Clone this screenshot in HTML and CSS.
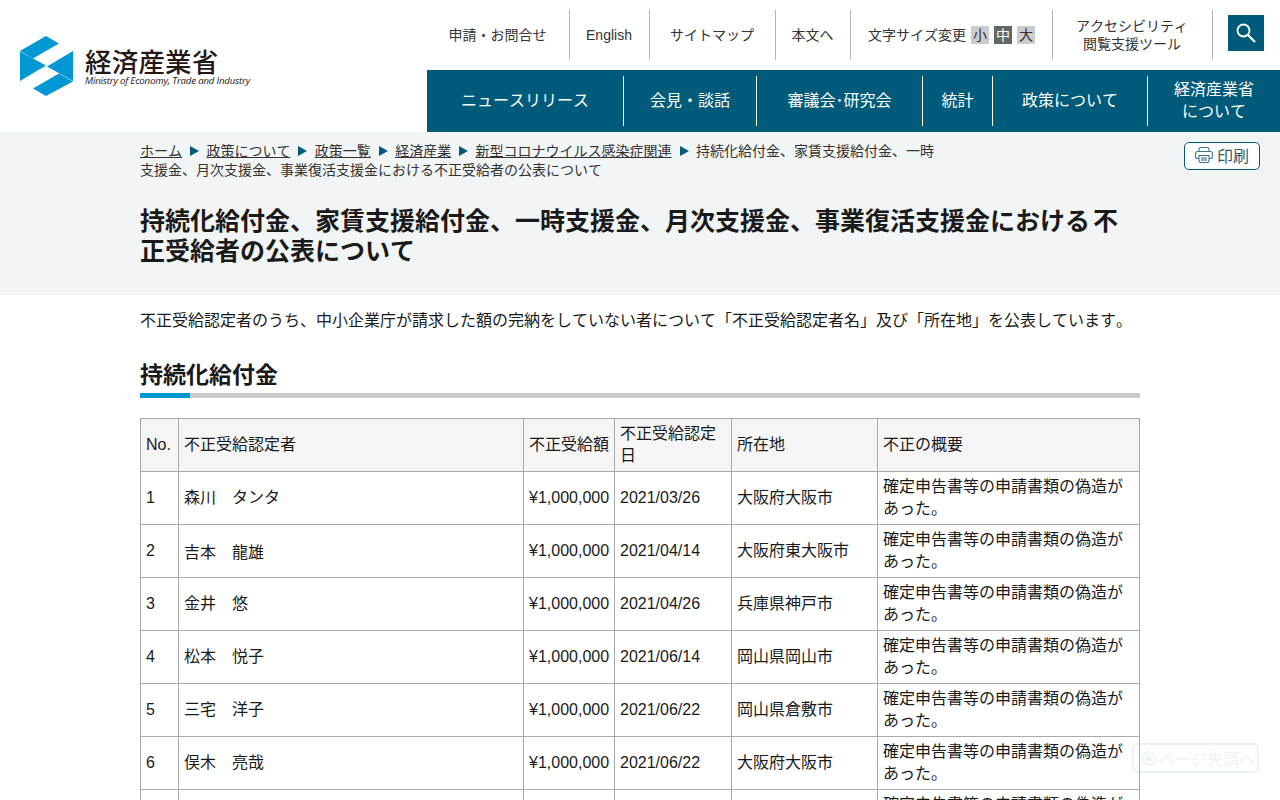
FILE: index.html
```html
<!DOCTYPE html>
<html lang="ja">
<head>
  <meta charset="UTF-8">
  <meta name="viewport" content="width=device-width, initial-scale=1.0">
  <title>持続化給付金、家賃支援給付金、一時支援金、月次支援金、事業復活支援金における不正受給者の公表について</title>
  <link rel="stylesheet" href="styles.css">
</head>
<body>
  <!-- Header -->
  <div class="header">
    <a href="#" class="logo">
      <svg class="logo-mark" width="54" height="60" viewBox="0 0 54 60">
        <polygon fill="#0098d4" points="0,15 26,0 39,7.5 13,22.5"/>
        <polygon fill="#0098d4" points="0,15.5 26,29.5 0,45"/>
        <polygon fill="#0098d4" points="53,15 53,45 27,30.5"/>
        <polygon fill="#0098d4" points="13,52.5 39,37.5 53,45.500 26,60"/>
      </svg>
      <div class="logo-text">
        <div class="logo-ja">経済産業省</div>
        <div class="logo-en">Ministry of Economy, Trade and Industry</div>
      </div>
    </a>
    <div class="header-right">
      <div class="top-nav">
        <a href="#" class="top-item w-contact">申請・お問合せ</a>
        <a href="#" class="top-item w-english">English</a>
        <a href="#" class="top-item w-sitemap">サイトマップ</a>
        <a href="#" class="top-item w-skip">本文へ</a>
        <div class="top-item w-size">
          <span>文字サイズ変更</span>
          <span class="size-btn">小</span>
          <span class="size-btn active">中</span>
          <span class="size-btn">大</span>
        </div>
        <a href="#" class="top-item w-access">アクセシビリティ<br>閲覧支援ツール</a>
        <a href="#" class="search-btn">
          <svg width="22" height="22" viewBox="0 0 22 22" fill="none" stroke="#fff">
            <circle cx="8.500" cy="8.500" r="6" stroke-width="1.800"/>
            <line x1="13" y1="13" x2="20" y2="20" stroke-width="2.200"/>
          </svg>
        </a>
      </div>
      <div class="main-nav">
        <a href="#" class="main-item w-news">ニュースリリース</a>
        <a href="#" class="main-item w-press">会見・談話</a>
        <a href="#" class="main-item w-council">審議会･研究会</a>
        <a href="#" class="main-item w-stats">統計</a>
        <a href="#" class="main-item w-policy">政策について</a>
        <a href="#" class="main-item w-about">経済産業省<br>について</a>
      </div>
    </div>
  </div>

  <!-- Title band -->
  <div class="title-band">
    <div class="container">
      <div class="crumb-row">
        <div class="breadcrumb">
          <a href="#">ホーム</a><span class="arrow"></span><a href="#">政策について</a><span class="arrow"></span><a href="#">政策一覧</a><span class="arrow"></span><a href="#">経済産業</a><span class="arrow"></span><a href="#">新型コロナウイルス感染症関連</a><span class="arrow"></span><span>持続化給付金、家賃支援給付金、一時支援金、月次支援金、事業復活支援金における不正受給者の公表について</span>
        </div>
      </div>
      <h1>持続化給付金、家賃支援給付金、一時支援金、月次支援金、事業復活支援金における<span class="title-gap">不</span>正受給者の公表について</h1>
    </div>
    <a href="#" class="print-btn">
      <svg width="18" height="16" viewBox="0 0 18 16" fill="none" stroke="#3f7488" stroke-width="1.100">
        <path d="M4 4.500V2a1.500 1.500 0 0 1 1.500-1.500h7A1.500 1.500 0 0 1 14 2v2.500"/>
        <path d="M4 11.500H2.500a2 2 0 0 1-2-2V6.500a2 2 0 0 1 2-2h13a2 2 0 0 1 2 2v3a2 2 0 0 1-2 2H14"/>
        <path d="M4 8.500h10v5a2 2 0 0 1-2 2H6a2 2 0 0 1-2-2z"/>
        <line x1="6" y1="11" x2="12" y2="11"/>
        <line x1="6" y1="13" x2="12" y2="13"/>
      </svg>
      印刷
    </a>
  </div>

  <!-- Main content -->
  <div class="container content">
    <p class="lead">不正受給認定者のうち、中小企業庁が請求した額の完納をしていない者について「不正受給認定者名」及び「所在地」を公表しています。</p>
    <h2>持続化給付金</h2>
    <table class="list-table">
      <colgroup>
        <col class="c-no"><col class="c-name"><col class="c-amount"><col class="c-date"><col class="c-place"><col class="c-note">
      </colgroup>
      <tr>
        <th>No.</th><th>不正受給認定者</th><th>不正受給額</th><th>不正受給認定日</th><th>所在地</th><th>不正の概要</th>
      </tr>
      <tr>
        <td>1</td><td>森川　タンタ</td><td>¥1,000,000</td><td>2021/03/26</td><td>大阪府大阪市</td><td>確定申告書等の申請書類の偽造があった。</td>
      </tr>
      <tr>
        <td>2</td><td class="cell-low">吉本　龍雄</td><td>¥1,000,000</td><td>2021/04/14</td><td>大阪府東大阪市</td><td>確定申告書等の申請書類の偽造があった。</td>
      </tr>
      <tr>
        <td>3</td><td>金井　悠</td><td>¥1,000,000</td><td>2021/04/26</td><td>兵庫県神戸市</td><td>確定申告書等の申請書類の偽造があった。</td>
      </tr>
      <tr>
        <td>4</td><td>松本　悦子</td><td>¥1,000,000</td><td>2021/06/14</td><td>岡山県岡山市</td><td>確定申告書等の申請書類の偽造があった。</td>
      </tr>
      <tr>
        <td>5</td><td>三宅　洋子</td><td>¥1,000,000</td><td>2021/06/22</td><td>岡山県倉敷市</td><td>確定申告書等の申請書類の偽造があった。</td>
      </tr>
      <tr>
        <td>6</td><td>俣木　亮哉</td><td>¥1,000,000</td><td>2021/06/22</td><td>大阪府大阪市</td><td>確定申告書等の申請書類の偽造があった。</td>
      </tr>
      <tr>
        <td></td><td></td><td></td><td></td><td></td><td>確定申告書等の申請書類の偽造があった。</td>
      </tr>
    </table>
  </div>

  <a href="#" class="page-top">
    <svg class="page-top-icon" width="15" height="15" viewBox="0 0 15 15">
      <circle cx="7.500" cy="7.500" r="6.500" fill="none" stroke="#005a7a" stroke-width="1.500"/>
      <polygon points="7.500,3.500 11.500,10.500 3.500,10.500" fill="#005a7a"/>
    </svg>
    ページ先頭へ
  </a>
</body>
</html>
```

FILE: styles.css
```css
body {
  font-family: "Liberation Sans", "Noto Sans CJK JP", sans-serif;
  font-kerning: none;
  color: #1a1a1a;
  background-color: #fff;
  margin: 0;
  padding: 0;
  font-size: 16px;
}
a {
  color: inherit;
  text-decoration: none;
}

/* Header */
.header {
  display: flex;
  justify-content: space-between;
  height: 132px;
}
.logo {
  display: flex;
  align-items: flex-start;
  padding: 36px 0 0 20px;
}
.logo-text {
  margin-left: 11px;
  padding-top: 10px;
}
.logo-ja {
  font-family: "Noto Sans CJK JP", sans-serif;
  font-weight: 500;
  font-size: 26.500px;
  line-height: 30px;
  letter-spacing: 0.200px;
  color: #231815;
}
.logo-en {
  margin-top: -1px;
  font-family: "Open Sans", sans-serif;
  font-style: italic;
  font-size: 9.700px;
  line-height: 11px;
  color: #231815;
  letter-spacing: -0.200px;
  white-space: nowrap;
}
.header-right {
  width: 853px;
}
.top-nav {
  display: flex;
  height: 70px;
  padding-top: 10px;
  box-sizing: border-box;
}
.top-item {
  display: flex;
  align-items: center;
  justify-content: center;
  height: 50px;
  box-sizing: border-box;
  padding-right: 1px;
  border-right: 1px solid #b5b5b5;
  font-size: 14px;
  line-height: 18px;
  color: #333;
  text-align: center;
}
.w-contact { width: 143px; }
.w-english { width: 80px; }
.w-sitemap { width: 126px; }
.w-skip { width: 75px; }
.w-size { width: 202px; padding-right: 0; }
.w-access { width: 160px; }
.size-btn {
  display: inline-block;
  width: 18px;
  height: 18px;
  background-color: #ccc;
  margin-left: 5px;
  line-height: 18px;
}
.size-btn.active {
  background-color: #666;
  color: #fff;
}
.search-btn {
  display: flex;
  align-items: center;
  justify-content: center;
  width: 36px;
  height: 36px;
  margin: 5px 0 0 15px;
  background-color: #005a7a;
}
.main-nav {
  display: flex;
  height: 62px;
  padding-top: 6px;
  box-sizing: border-box;
  background-color: #005a7a;
}
.main-item {
  display: flex;
  align-items: center;
  justify-content: center;
  height: 50px;
  box-sizing: border-box;
  border-right: 1px solid #fff;
  color: #fff;
  font-size: 16px;
  line-height: 22px;
  text-align: center;
}
.main-item:last-child {
  border-right: none;
}
.w-news { width: 197px; }
.w-press { width: 133px; }
.w-council { width: 166px; }
.w-stats { width: 70px; }
.w-policy { width: 155px; }
.w-about { width: 132px; }

/* Title band */
.title-band {
  position: relative;
  background-color: #f2f5f5;
  height: 163px;
}
.container {
  width: 1000px;
  margin: 0 auto;
}
.crumb-row {
  padding-top: 10px;
}
.breadcrumb {
  width: 800px;
  font-size: 14px;
  line-height: 19px;
  color: #333;
}
.breadcrumb a {
  text-decoration: underline;
}
.arrow {
  display: inline-block;
  width: 0;
  height: 0;
  margin: 0 7.400px 0 8px;
  border-left: 9px solid #005a7a;
  border-top: 5px solid transparent;
  border-bottom: 5px solid transparent;
}
h1 {
  margin: 26px 0 0;
  font-size: 25px;
  line-height: 30px;
  font-weight: bold;
  color: #1a1a1a;
}
.title-gap {
  margin-left: 3px;
}
.print-btn {
  position: absolute;
  top: 10px;
  right: 20px;
  display: flex;
  align-items: center;
  justify-content: center;
  gap: 4px;
  width: 76px;
  height: 28px;
  box-sizing: border-box;
  padding-bottom: 2px;
  background-color: #fff;
  border: 1px solid #005a7a;
  border-radius: 5px;
  font-size: 16px;
  color: #33586a;
}

/* Content */
.content {
  padding-top: 15px;
}
.lead {
  margin: 0;
  font-size: 16px;
  line-height: 22px;
}
h2 {
  margin: 26px 0 20px;
  padding-bottom: 1px;
  font-size: 23px;
  line-height: 34px;
  font-weight: bold;
  border-bottom: 5px solid #ccc;
  position: relative;
}
h2::after {
  content: "";
  position: absolute;
  left: 0;
  bottom: -5px;
  width: 50px;
  height: 5px;
  background-color: #0098d4;
}
.list-table {
  width: 999px;
  border-collapse: collapse;
  table-layout: fixed;
  font-size: 16px;
  line-height: 22px;
}
.list-table th,
.list-table td {
  height: 53px;
  box-sizing: border-box;
  padding: 4px 5px;
  border: 1px solid #aaa;
  text-align: left;
  font-weight: normal;
}
.list-table th {
  background-color: #f5f5f5;
}
.list-table .cell-low {
  padding-top: 8px;
}
.c-no { width: 38px; }
.c-name { width: 345px; }
.c-amount { width: 91px; }
.c-date { width: 117px; }
.c-place { width: 146px; }
.c-note { width: 262px; }

/* Back to top */
.page-top {
  position: fixed;
  right: 21px;
  bottom: 27px;
  display: flex;
  align-items: center;
  gap: 3px;
  width: 127px;
  height: 30px;
  box-sizing: border-box;
  padding-left: 7px;
  background-color: #fff;
  border: 2px solid #005a7a;
  border-radius: 5px;
  color: #005a7a;
  font-size: 16px;
  opacity: 0.08;
}
```
